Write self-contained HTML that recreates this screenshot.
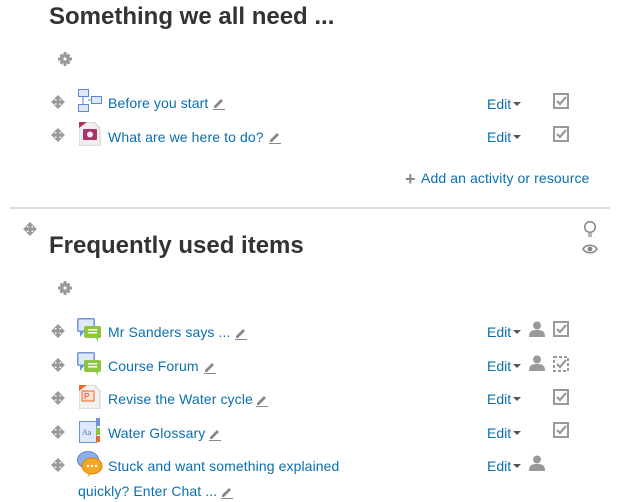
<!DOCTYPE html>
<html><head><meta charset="utf-8"><style>
body{margin:0;width:617px;height:502px;overflow:hidden;background:#fff;font-family:"Liberation Sans",sans-serif;position:relative}
.a{position:absolute}
h3{position:absolute;margin:0;font-size:24px;font-weight:bold;color:#333;white-space:nowrap}
.l{position:absolute;font-size:14px;color:#0a6fae;white-space:nowrap;line-height:16px;letter-spacing:0.1px}
.ed{position:absolute;font-size:14px;color:#0a6fae;line-height:16px}
.ed:after{content:"";display:inline-block;border-left:4px solid transparent;border-right:4px solid transparent;border-top:4px solid #555;margin-left:2px;vertical-align:3px}
svg{position:absolute}
</style></head><body>
<svg width="0" height="0" style="position:absolute"><defs>
<g id="mv"><path d="M7 0L11 4H8.5V5.5H8.5V5.5H10V5.5V3.5L14 7L10 10.5V8.5H8.5V10H11L7 14L3 10H5.5V8.5H4V10.5L0 7L4 3.5V5.5H5.5V4H3Z" fill="#999"/><rect x="5.5" y="3" width="3" height="8" fill="#999"/><rect x="3" y="5.5" width="8" height="3" fill="#999"/></g>
<g id="gr"><circle cx="7" cy="7" r="5" fill="#999"/><path d="M5.5 0h3v14h-3zM0 5.5h14v3h-14zM1.5 3.6l2.1-2.1 9 9-2.1 2.1zM10.4 1.5l2.1 2.1-9 9-2.1-2.1z" fill="#999"/><circle cx="7" cy="7" r="1.6" fill="#fff"/></g>
<g id="pen"><path d="M2 10L9 3L11 5L4 12H2Z" fill="#888"/><rect x="1" y="13" width="12" height="1" fill="#888"/></g>
<g id="ck"><rect x="1" y="1" width="14" height="14" fill="none" stroke="#999" stroke-width="2"/><path d="M4 8L7 11L13 4" fill="none" stroke="#999" stroke-width="2.2"/></g>
<g id="ckd"><rect x="1" y="1" width="14" height="14" fill="none" stroke="#999" stroke-width="2" stroke-dasharray="3 2"/><path d="M4 8L7 11L13 4" fill="none" stroke="#999" stroke-width="2.2"/></g>
<g id="ps"><circle cx="8" cy="4.5" r="4" fill="#999"/><path d="M0 16C0 10 3 9 8 9S16 10 16 16Z" fill="#999"/></g>
<g id="fm"><rect x="0" y="0" width="18" height="14" rx="2" fill="#6e95d8"/><rect x="1.5" y="1.5" width="15" height="11" fill="#dfe8f8"/><path d="M3 14l0 5 4-5z" fill="#6e95d8"/><rect x="7" y="8" width="17" height="12" rx="2" fill="#8cc63f"/><path d="M19 20l2 4 0-4z" fill="#8cc63f"/><rect x="11" y="11" width="9" height="1.5" fill="#fff"/><rect x="11" y="14" width="9" height="1.5" fill="#fff"/></g>
</defs></svg>

<h3 style="left:49px;top:3px">Something we all need ...</h3>
<svg style="left:58px;top:52px" width="14" height="14"><use href="#gr"/></svg>

<svg style="left:51px;top:95px" width="14" height="14"><use href="#mv"/></svg>
<svg style="left:78px;top:89px" width="25" height="24"><rect x="0.5" y="0.5" width="10" height="7" fill="#dfe8f8" stroke="#5a86d6"/><rect x="13.5" y="7.5" width="10" height="7" fill="#dfe8f8" stroke="#5a86d6"/><rect x="0.5" y="15.5" width="10" height="7" fill="#dfe8f8" stroke="#5a86d6"/><path d="M5 8v8M10 11h4" stroke="#5a86d6"/></svg>
<div class="l" style="left:108px;top:95px">Before you start</div>
<svg style="left:212px;top:96px" width="14" height="14"><use href="#pen"/></svg>
<div class="ed" style="left:487px;top:96px">Edit</div>
<svg style="left:553px;top:93px" width="16" height="16"><use href="#ck"/></svg>

<svg style="left:51px;top:128px" width="14" height="14"><use href="#mv"/></svg>
<svg style="left:79px;top:122px" width="22" height="24"><path d="M0 0h15l6 6v18h-21z" fill="#eee" stroke="#ccc"/><path d="M0 0h8l-8 6z" fill="#b0306a"/><rect x="4" y="7" width="14" height="11" rx="1" fill="#b0306a"/><circle cx="11" cy="12.5" r="3" fill="#eee"/></svg>
<div class="l" style="left:108px;top:129px">What are we here to do?</div>
<svg style="left:268px;top:130px" width="14" height="14"><use href="#pen"/></svg>
<div class="ed" style="left:487px;top:129px">Edit</div>
<svg style="left:553px;top:126px" width="16" height="16"><use href="#ck"/></svg>

<div class="a" style="left:405px;top:171px;font-size:18px;color:#888;line-height:16px;font-weight:bold">+</div>
<div class="l" style="left:421px;top:170px">Add an activity or resource</div>

<div class="a" style="left:10px;top:207px;width:600px;height:2px;background:#ddd"></div>

<svg style="left:23px;top:222px" width="14" height="14"><use href="#mv"/></svg>
<svg style="left:583px;top:221px" width="14" height="16"><circle cx="7" cy="6" r="5.3" fill="none" stroke="#888" stroke-width="1.5"/><path d="M5 13h4M5 15h4" stroke="#888" stroke-width="1.3"/></svg>
<svg style="left:582px;top:243px" width="16" height="12"><path d="M1 6C4 1 12 1 15 6C12 11 4 11 1 6Z" fill="none" stroke="#888" stroke-width="1.6"/><circle cx="8" cy="6" r="2.4" fill="#888"/></svg>

<h3 style="left:49px;top:232px">Frequently used items</h3>
<svg style="left:58px;top:281px" width="14" height="14"><use href="#gr"/></svg>

<svg style="left:51px;top:324px" width="14" height="14"><use href="#mv"/></svg>
<svg style="left:77px;top:318px" width="25" height="25"><use href="#fm"/></svg>
<div class="l" style="left:108px;top:324px">Mr Sanders says ...</div>
<svg style="left:234px;top:326px" width="14" height="14"><use href="#pen"/></svg>
<div class="ed" style="left:487px;top:324px">Edit</div>
<svg style="left:529px;top:321px" width="16" height="16"><use href="#ps"/></svg>
<svg style="left:553px;top:321px" width="16" height="16"><use href="#ck"/></svg>

<svg style="left:51px;top:358px" width="14" height="14"><use href="#mv"/></svg>
<svg style="left:77px;top:352px" width="25" height="25"><use href="#fm"/></svg>
<div class="l" style="left:108px;top:358px">Course Forum</div>
<svg style="left:203px;top:360px" width="14" height="14"><use href="#pen"/></svg>
<div class="ed" style="left:487px;top:358px">Edit</div>
<svg style="left:529px;top:355px" width="16" height="16"><use href="#ps"/></svg>
<svg style="left:553px;top:356px" width="16" height="16"><use href="#ckd"/></svg>

<svg style="left:51px;top:391px" width="14" height="14"><use href="#mv"/></svg>
<svg style="left:79px;top:385px" width="22" height="24"><path d="M0 0h15l6 6v18h-21z" fill="#f2f2f2" stroke="#ccc"/><path d="M0 0h8l-8 6z" fill="#e8692d"/><rect x="3" y="6" width="12" height="10" fill="#fbe0d2" stroke="#e8692d"/><text x="5" y="14" font-size="8" fill="#d04a1a" font-family="Liberation Sans">P</text></svg>
<div class="l" style="left:108px;top:391px">Revise the Water cycle</div>
<svg style="left:255px;top:393px" width="14" height="14"><use href="#pen"/></svg>
<div class="ed" style="left:487px;top:391px">Edit</div>
<svg style="left:553px;top:389px" width="16" height="16"><use href="#ck"/></svg>

<svg style="left:51px;top:425px" width="14" height="14"><use href="#mv"/></svg>
<svg style="left:79px;top:418px" width="22" height="26"><rect x="0.5" y="3.5" width="17" height="21" fill="#dfe8f8" stroke="#6e95d8"/><rect x="17" y="0" width="4" height="8" fill="#6e95d8"/><rect x="17" y="10" width="4" height="7" fill="#8cc63f"/><rect x="17" y="18" width="4" height="6" fill="#e8692d"/><text x="3" y="17" font-size="8" fill="#4a6fb0" font-family="Liberation Serif">Aa</text></svg>
<div class="l" style="left:108px;top:425px">Water Glossary</div>
<svg style="left:208px;top:427px" width="14" height="14"><use href="#pen"/></svg>
<div class="ed" style="left:487px;top:425px">Edit</div>
<svg style="left:553px;top:422px" width="16" height="16"><use href="#ck"/></svg>

<svg style="left:51px;top:458px" width="14" height="14"><use href="#mv"/></svg>
<svg style="left:77px;top:451px" width="26" height="26"><ellipse cx="11" cy="9" rx="10.5" ry="8.5" fill="#8ab0e8" stroke="#5a86d6"/><ellipse cx="15" cy="15" rx="10" ry="8" fill="#f5a623" stroke="#d0851a"/><path d="M12 22l-2 4 5-3z" fill="#f5a623"/><circle cx="11" cy="15" r="1.2" fill="#fff"/><circle cx="15" cy="15" r="1.2" fill="#fff"/><circle cx="19" cy="15" r="1.2" fill="#fff"/></svg>
<div class="l" style="left:108px;top:458px">Stuck and want something explained</div>
<div class="l" style="left:78px;top:483px">quickly? Enter Chat ...</div>
<svg style="left:220px;top:485px" width="14" height="14"><use href="#pen"/></svg>
<div class="ed" style="left:487px;top:458px">Edit</div>
<svg style="left:529px;top:455px" width="16" height="16"><use href="#ps"/></svg>
</body></html>
